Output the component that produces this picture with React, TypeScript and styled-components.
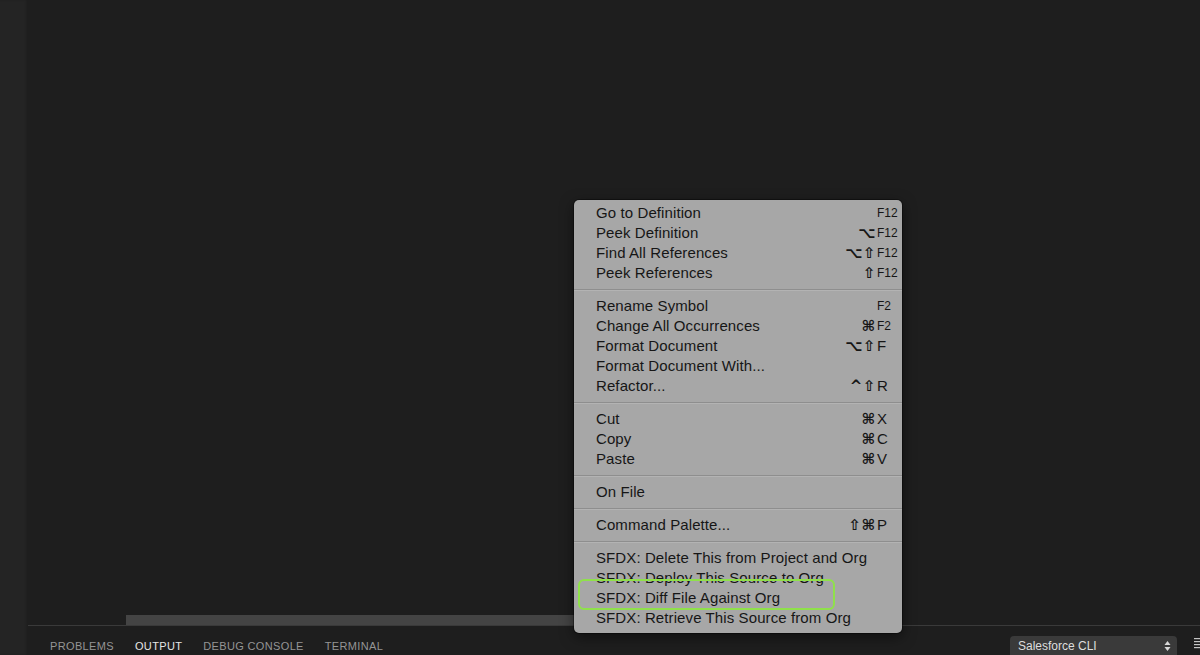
import React from 'react'
import styled, { createGlobalStyle } from 'styled-components'

const GlobalStyle = createGlobalStyle`
  html, body {
    margin: 0;
    padding: 0;
    background: #1e1e1e;
  }
  body {
    font-family: 'Liberation Sans', Arial, sans-serif;
    overflow: hidden;
  }
`

const Screen = styled.div`
  position: relative;
  width: 1200px;
  height: 655px;
  display: flex;
  background: #1e1e1e;
  overflow: hidden;
`

const ActivityStrip = styled.div`
  width: 28px;
  flex-shrink: 0;
  background: #242424;
  box-shadow: inset -2px 0 2px rgba(0, 0, 0, 0.15);
`

const Workbench = styled.div`
  flex: 1;
  display: flex;
  flex-direction: column;
`

const Editor = styled.div`
  flex: 1;
  display: flex;
  flex-direction: column;
  justify-content: flex-end;
  background: #1e1e1e;
`

const ScrollTrack = styled.div`
  height: 10px;
  padding-left: 98px;
  display: flex;
`

const ScrollThumb = styled.div`
  width: 600px;
  background: #444444;
`

const Panel = styled.div`
  height: 29px;
  border-top: 1px solid #3a3a3a;
  display: flex;
  align-items: flex-end;
  background: #1e1e1e;
`

const Tabs = styled.div`
  display: flex;
  gap: 21px;
  padding-left: 22px;
  padding-bottom: 3px;
  flex: 1;
`

const Tab = styled.span<{ $active?: boolean }>`
  font-size: 11px;
  letter-spacing: 0.35px;
  color: ${(p) => (p.$active ? '#e6e6e6' : '#959595')};
`

const SelectBox = styled.div`
  width: 167px;
  height: 20px;
  margin-right: 23px;
  margin-bottom: -1px;
  background: #3a3a3a;
  border-radius: 4px 4px 0 0;
  display: flex;
  align-items: center;
  justify-content: space-between;
  padding: 0 6px 0 8px;
  box-sizing: border-box;
  color: #dedede;
  font-size: 12px;
`

const PanelMenuIcon = styled.div`
  position: absolute;
  right: 0;
  bottom: 2px;
  width: 6px;
`

const Menu = styled.div`
  position: absolute;
  left: 574px;
  top: 200px;
  width: 328px;
  padding: 3px 0 5px;
  box-sizing: border-box;
  background: #a7a7a7;
  border-radius: 5px;
  box-shadow: 0 4px 14px rgba(0, 0, 0, 0.5), 0 0 0 1px rgba(0, 0, 0, 0.35);
  color: #161616;
  font-family: 'Liberation Sans', Arial, sans-serif;
`

const Row = styled.div`
  height: 20px;
  display: flex;
  align-items: center;
  padding: 0 5px 0 22px;
  font-size: 15px;
  line-height: 20px;
`

const Label = styled.span`
  flex: 1;
  white-space: nowrap;
  letter-spacing: 0.1px;
`

const Shortcut = styled.span`
  display: flex;
  align-items: center;
`

const Mods = styled.span`
  font-family: 'DejaVu Sans', sans-serif;
  font-size: 15px;
  font-weight: bold;
  letter-spacing: 0.5px;
  text-align: right;
`

const Key = styled.span<{ $small?: boolean }>`
  width: 20px;
  margin-left: 1px;
  font-size: ${(p) => (p.$small ? '12px' : '15px')};
`

const Separator = styled.div`
  height: 13px;
  display: flex;
  align-items: center;
  &::after {
    content: '';
    width: 100%;
    height: 1px;
    background: #8e8e8e;
    border-bottom: 1px solid #b3b3b3;
  }
`

const Highlight = styled.div`
  position: absolute;
  left: 578px;
  top: 579px;
  width: 257px;
  height: 31px;
  box-sizing: border-box;
  border: 2.5px solid #8fe14a;
  border-radius: 6px;
  pointer-events: none;
`

type Item = { label: string; mods?: string; key?: string; small?: boolean }

const groups: Item[][] = [
  [
    { label: 'Go to Definition', key: 'F12', small: true },
    { label: 'Peek Definition', mods: '⌥', key: 'F12', small: true },
    { label: 'Find All References', mods: '⌥⇧', key: 'F12', small: true },
    { label: 'Peek References', mods: '⇧', key: 'F12', small: true },
  ],
  [
    { label: 'Rename Symbol', key: 'F2', small: true },
    { label: 'Change All Occurrences', mods: '⌘', key: 'F2', small: true },
    { label: 'Format Document', mods: '⌥⇧', key: 'F' },
    { label: 'Format Document With...' },
    { label: 'Refactor...', mods: '^⇧', key: 'R' },
  ],
  [
    { label: 'Cut', mods: '⌘', key: 'X' },
    { label: 'Copy', mods: '⌘', key: 'C' },
    { label: 'Paste', mods: '⌘', key: 'V' },
  ],
  [{ label: 'On File' }],
  [{ label: 'Command Palette...', mods: '⇧⌘', key: 'P' }],
  [
    { label: 'SFDX: Delete This from Project and Org' },
    { label: 'SFDX: Deploy This Source to Org' },
    { label: 'SFDX: Diff File Against Org' },
    { label: 'SFDX: Retrieve This Source from Org' },
  ],
]

const MenuRow = ({ item }: { item: Item }) => (
  <Row>
    <Label>{item.label}</Label>
    {item.key && (
      <Shortcut>
        <Mods>{item.mods}</Mods>
        <Key $small={item.small}>{item.key}</Key>
      </Shortcut>
    )}
  </Row>
)

export default function App() {
  return (
    <>
      <GlobalStyle />
      <Screen>
        <ActivityStrip />
        <Workbench>
          <Editor>
            <ScrollTrack>
              <ScrollThumb />
            </ScrollTrack>
          </Editor>
          <Panel>
            <Tabs>
              <Tab>PROBLEMS</Tab>
              <Tab $active>OUTPUT</Tab>
              <Tab>DEBUG CONSOLE</Tab>
              <Tab>TERMINAL</Tab>
            </Tabs>
            <SelectBox>
              <span>Salesforce CLI</span>
              <svg width="7" height="12" viewBox="0 0 7 12">
                <path d="M3.5 1 L6.5 5 L0.5 5 Z" fill="#d8d8d8" />
                <path d="M3.5 11 L6.5 7 L0.5 7 Z" fill="#d8d8d8" />
              </svg>
            </SelectBox>
          </Panel>
        </Workbench>
        <PanelMenuIcon>
          <svg width="6" height="12" viewBox="0 0 6 12">
            <rect x="0" y="1" width="6" height="1.2" fill="#c5c5c5" />
            <rect x="0" y="4" width="6" height="1.2" fill="#c5c5c5" />
            <rect x="0" y="7" width="6" height="1.2" fill="#c5c5c5" />
            <rect x="0" y="10" width="6" height="1.2" fill="#c5c5c5" />
          </svg>
        </PanelMenuIcon>
        <Menu>
          {groups.map((group, gi) => (
            <React.Fragment key={gi}>
              {gi > 0 && <Separator />}
              {group.map((item) => (
                <MenuRow key={item.label} item={item} />
              ))}
            </React.Fragment>
          ))}
        </Menu>
        <Highlight />
      </Screen>
    </>
  )
}
